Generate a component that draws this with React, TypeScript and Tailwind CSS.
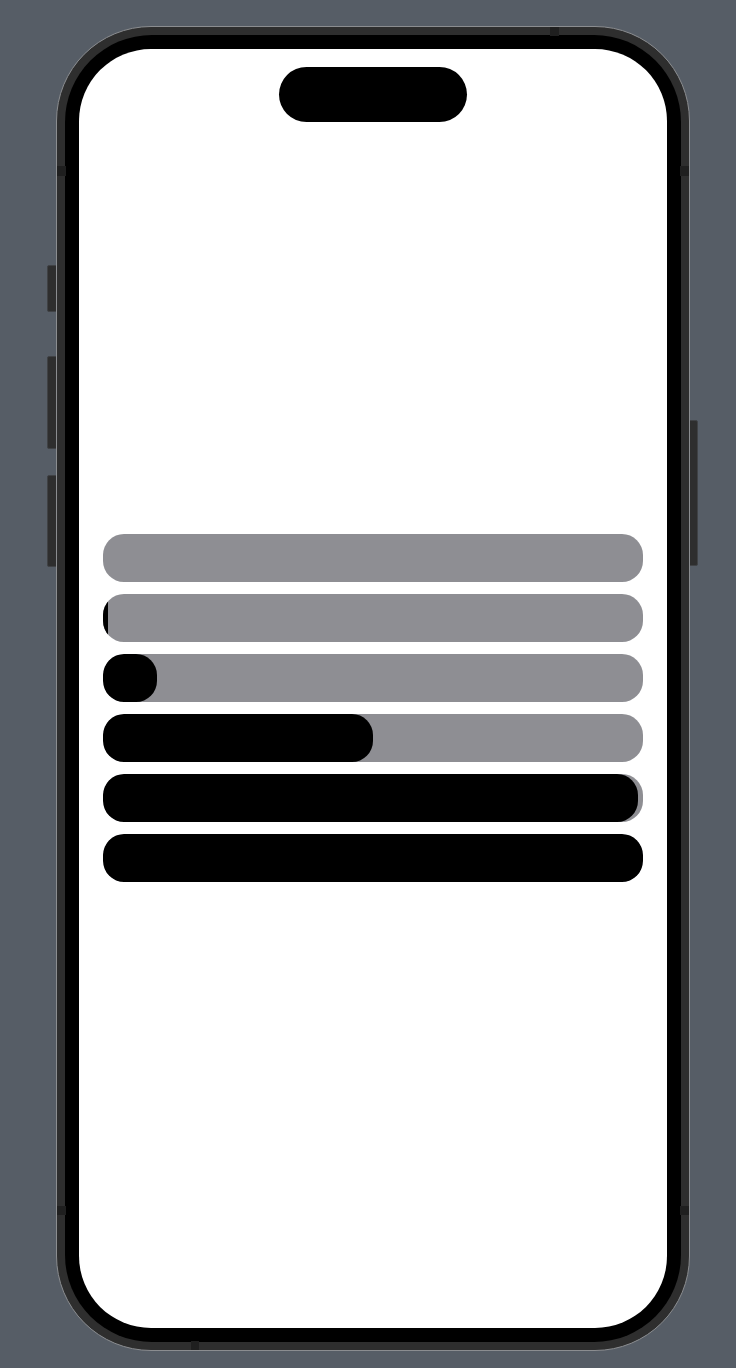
import React from "react";

const levels = [0, 0.01, 0.1, 0.5, 0.99, 1];

function ProgressBar({ value }: { value: number }) {
  return (
    <div className="h-[48px] w-full overflow-hidden rounded-[21px] bg-[#8e8e93]">
      <div
        className="h-full rounded-[21px] bg-black"
        style={{ width: `${value * 100}%` }}
      />
    </div>
  );
}

function Band({ className }: { className: string }) {
  return <div className={`absolute bg-[#1f1f1f] ${className}`} />;
}

export default function App() {
  return (
    <div className="relative h-[1368px] w-[736px] overflow-hidden bg-[#565d66] pl-[56px] pt-[26px]">
      {/* device body */}
      <div className="relative h-[1325px] w-[634px]">
        {/* volume / action buttons */}
        <div className="absolute left-[-9px] top-[239px] flex w-[10px] flex-col">
          <div className="h-[47px] rounded-l-[2px] border border-[#404245] bg-[#2e2e2e]" />
          <div className="mt-[44px] h-[93px] rounded-l-[2px] border border-[#404245] bg-[#2e2e2e]" />
          <div className="mt-[26px] h-[92px] rounded-l-[2px] border border-[#404245] bg-[#2e2e2e]" />
        </div>
        {/* power button */}
        <div className="absolute right-[-8px] top-[394px] h-[146px] w-[9px] rounded-r-[2px] border border-[#404245] bg-[#2e2e2e]" />

        <div className="relative h-full w-full rounded-[95px] border border-[#8b8d90] bg-[#2e2e2e] p-[8px]">
          {/* antenna bands */}
          <Band className="left-0 top-[139px] h-[10px] w-[9px]" />
          <Band className="right-0 top-[139px] h-[10px] w-[9px]" />
          <Band className="left-0 top-[1179px] h-[9px] w-[9px]" />
          <Band className="right-0 top-[1179px] h-[9px] w-[9px]" />
          <Band className="left-[493px] top-0 h-[9px] w-[9px]" />
          <Band className="bottom-0 left-[134px] h-[9px] w-[8px]" />

          <div className="h-full w-full rounded-[87px] bg-black p-[14px]">
            {/* screen */}
            <div className="relative flex h-full w-full flex-col justify-center gap-[12px] overflow-hidden rounded-[72px] bg-white px-[24px] pb-[51px] pt-[89px]">
              {/* dynamic island */}
              <div className="absolute left-1/2 top-[18px] h-[55px] w-[188px] -translate-x-1/2 rounded-full bg-black" />
              {levels.map((v, i) => (
                <ProgressBar key={i} value={v} />
              ))}
            </div>
          </div>
        </div>
      </div>
    </div>
  );
}
